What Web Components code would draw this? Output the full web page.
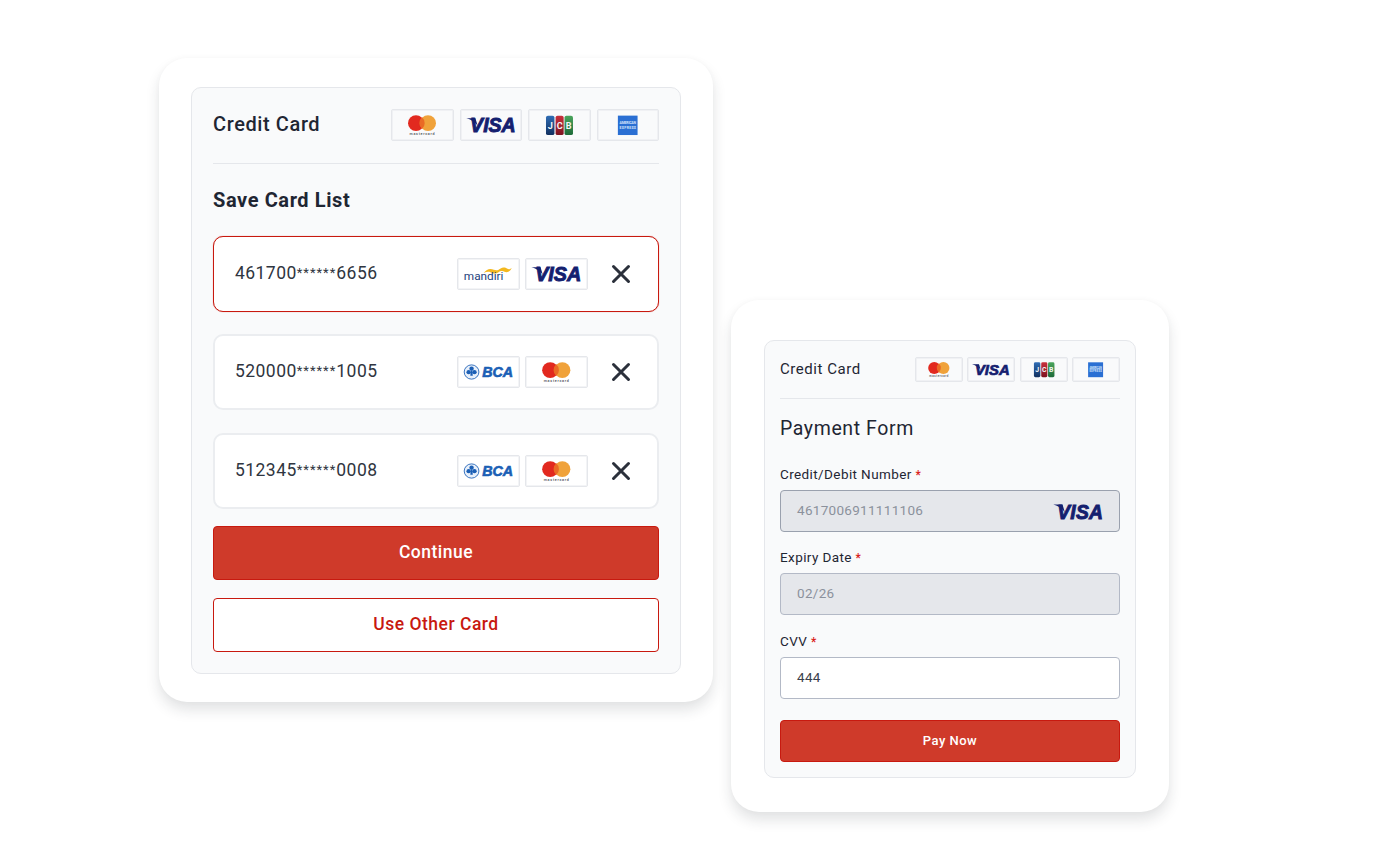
<!DOCTYPE html>
<html>
<head>
<meta charset="utf-8">
<title>Credit Card</title>
<style>
    html, body { margin: 0; background: #fff; }
    body { font-family: Roboto, "Liberation Sans", sans-serif; color: #1f2633; }
</style>
</head>
<body>

<pay-stage>
    <pay-shell big>
        <card-top big></card-top>
        <h-title big>Save Card List</h-title>
        <saved-card number="461700******6656" bank="mandiri" brand="visa" active></saved-card>
        <saved-card number="520000******1005" bank="bca" brand="mastercard"></saved-card>
        <saved-card number="512345******0008" bank="bca" brand="mastercard"></saved-card>
        <pay-button big>Continue</pay-button>
        <pay-button big outline>Use Other Card</pay-button>
    </pay-shell>

    <pay-shell>
        <card-top></card-top>
        <h-title>Payment Form</h-title>
        <form-field label="Credit/Debit Number" value="4617006911111106" disabled strong><card-logo type="visa" bare></card-logo></form-field>
        <form-field label="Expiry Date" value="02/26" disabled></form-field>
        <form-field label="CVV" value="444"></form-field>
        <pay-button>Pay Now</pay-button>
    </pay-shell>
</pay-stage>

<script>
const LOGOS = {
    mastercard: `
        <circle cx="25" cy="14" r="8.300" fill="#e2291f"/>
        <circle cx="37.500" cy="14" r="8.300" fill="#f0a23a"/>
        <path d="M31.250 7.800a8.300 8.300 0 0 1 0 12.400a8.300 8.300 0 0 1 0-12.400z" fill="#ea6a25"/>
        <text x="31.250" y="26.400" text-anchor="middle" font-size="3.800" font-weight="500" fill="#4a4b52" font-family="Roboto, sans-serif" textLength="26">mastercard</text>`,
    visa: `
        <path d="M5.500 8.800h9.500l2.500 8.500c-2-4-6.500-7-12-8.500z" fill="#14206f"/>
        <text x="9.500" y="24" font-size="21.500" font-weight="900" font-style="italic" fill="#14206f" stroke="#14206f" stroke-width="1" font-family="'Liberation Sans', sans-serif" textLength="47.500" lengthAdjust="spacingAndGlyphs">VISA</text>`,
    jcb: `
        <defs>
            <linearGradient id="jb" x1="0" y1="0" x2="0" y2="1"><stop offset="0" stop-color="#2f6db5"/><stop offset="1" stop-color="#12305f"/></linearGradient>
            <linearGradient id="jr" x1="0" y1="0" x2="0" y2="1"><stop offset="0" stop-color="#c9303c"/><stop offset="1" stop-color="#7c1420"/></linearGradient>
            <linearGradient id="jg" x1="0" y1="0" x2="0" y2="1"><stop offset="0" stop-color="#4aa55c"/><stop offset="1" stop-color="#1d6a38"/></linearGradient>
        </defs>
        <rect x="17.700" y="6" width="8.800" height="20.700" rx="2" fill="url(#jb)"/>
        <rect x="27.700" y="6" width="8.400" height="20.700" rx="2" fill="url(#jr)"/>
        <rect x="37" y="6" width="8.800" height="20.700" rx="2" fill="url(#jg)"/>
        <g font-size="9.500" font-weight="700" fill="#f4f6f8" text-anchor="middle" font-family="Roboto, sans-serif">
            <text x="22.100" y="19.800">J</text><text x="31.900" y="19.800">C</text><text x="41.400" y="19.800">B</text>
        </g>`,
    amex: `
        <rect x="20.700" y="6" width="20.500" height="20.700" fill="#2a6fd3"/>
        <g font-size="3.600" font-weight="700" fill="#d7e6fb" text-anchor="middle" font-family="Roboto, sans-serif">
            <text x="31" y="15.400" textLength="17">AMERICAN</text><text x="31" y="20" textLength="17">EXPRESS</text>
        </g>`,
    mandiri: `
        <path d="M26.500 15C30 10.500 33 10 37 11.500C40 12.500 41 12 44 10C46.500 8.500 49 9 51 10.500C52.500 11.500 53.500 11 55.500 9.500C54 13 51 15 48 13.500C46 12.500 44 12.500 41.500 14.500C39 16 36 15.500 33.500 14C31.500 13 29 13.500 26.500 15z" fill="#f3b81f"/>
        <text x="6" y="22.500" font-size="12.500" fill="#1e3f7d" font-family="Roboto, sans-serif" textLength="41" lengthAdjust="spacingAndGlyphs">mandiri</text>`,
    bca: `
        <circle cx="14" cy="16" r="7.600" fill="#e8f0fa" stroke="#1b5fb5" stroke-width=".9"/>
        <circle cx="14" cy="12.500" r="2.300" fill="#1b5fb5"/>
        <circle cx="11" cy="16.200" r="2.300" fill="#1b5fb5"/>
        <circle cx="17" cy="16.200" r="2.300" fill="#1b5fb5"/>
        <path d="M13.300 15h1.400l.6 5h-2.600z" fill="#1b5fb5"/>
        <text x="25" y="21.800" font-size="16.500" font-weight="900" font-style="italic" fill="#1b5fb5" stroke="#1b5fb5" stroke-width=".7" font-family="'Liberation Sans', sans-serif" textLength="32" lengthAdjust="spacingAndGlyphs">BCA</text>`
};

class PayStage extends HTMLElement {
    constructor() {
        super();
        this.attachShadow({mode: 'open'}).innerHTML = `
            <style>
                :host { display: flex; align-items: flex-start; gap: 18px; box-sizing: border-box;
                        width: 1396px; height: 862px; padding: 58px 0 0 159px; overflow: hidden; }
                ::slotted(pay-shell:last-child) { margin-top: 242px; }
            </style>
            <slot></slot>`;
    }
}

class PayShell extends HTMLElement {
    constructor() {
        super();
        this.attachShadow({mode: 'open'}).innerHTML = `
            <style>
                :host { display: block; box-sizing: border-box; background: #fff; width: 438px; height: 512px;
                        padding: 40px 33px 34px; border-radius: 28px;
                        box-shadow: 0 8px 14px rgba(30, 35, 50, .13), 0 0 6px rgba(30, 35, 50, .025); }
                :host([big]) { width: 554px; height: 644px; padding: 29px 32px 28px; }
                .panel { box-sizing: border-box; height: 100%; background: #f9fafb; border: 1px solid #e5e7eb;
                         border-radius: 10px; padding: 16px 15px 0; display: flex; flex-direction: column; }
                :host([big]) .panel { padding: 21px 21px 0; }
            </style>
            <div class="panel"><slot></slot></div>`;
    }
}

class CardLogo extends HTMLElement {
    constructor() {
        super();
        this.attachShadow({mode: 'open'}).innerHTML = `
            <style>
                :host { display: block; box-sizing: border-box; width: var(--logo-w, 63px); height: var(--logo-h, 32px);
                        background: transparent; border: 1px solid #e5e7eb; border-radius: 2px;
                        box-shadow: inset 0 0 0 1px rgba(229, 231, 235, .45); }
                :host([bare]) { background: none; border: 0; box-shadow: none; width: 61px; height: 31px; margin-right: 10px; }
                svg { display: block; width: 100%; height: 100%; }
            </style>
            <svg viewBox="0 0 63 32" preserveAspectRatio="none">${LOGOS[this.getAttribute('type')]}</svg>`;
    }
}

class CardTop extends HTMLElement {
    constructor() {
        super();
        this.attachShadow({mode: 'open'}).innerHTML = `
            <style>
                :host { display: flex; align-items: center; justify-content: space-between; box-sizing: border-box;
                        height: 42px; border-bottom: 1px solid #e5e7eb; padding-bottom: 16px; --logo-w: 48px; --logo-h: 25px; }
                :host([big]) { height: 55px; padding-bottom: 22px; --logo-w: 62.500px; --logo-h: 32px; }
                .name { font-size: 15px; letter-spacing: .55px; color: #1f2633; margin-top: -2px; }
                :host([big]) .name { font-size: 20px; font-weight: 500; letter-spacing: .6px; }
                .logos { display: flex; gap: 4.500px; }
                :host([big]) .logos { gap: 6px; }
            </style>
            <span class="name">Credit Card</span>
            <div class="logos">
                <card-logo type="mastercard"></card-logo>
                <card-logo type="visa"></card-logo>
                <card-logo type="jcb"></card-logo>
                <card-logo type="amex"></card-logo>
            </div>`;
    }
}

class HTitle extends HTMLElement {
    constructor() {
        super();
        this.attachShadow({mode: 'open'}).innerHTML = `
            <style>
                :host { display: block; font-size: 19.500px; line-height: 24px; letter-spacing: .6px; color: #1f2633;
                        margin: 18px 0 26px; }
                :host([big]) { font-weight: 700; font-size: 20px; letter-spacing: .6px; margin: 24px 0 24px; }
            </style>
            <slot></slot>`;
    }
}

class SavedCard extends HTMLElement {
    constructor() {
        super();
        const number = this.getAttribute('number').replace(/\*+/, '<span class="st">$&</span>');
        this.attachShadow({mode: 'open'}).innerHTML = `
            <style>
                :host { display: flex; align-items: center; box-sizing: border-box; height: 76px; background: #fff;
                        border: 2px solid #ebedf0; border-radius: 10px; padding: 0 26px 0 20px; margin-bottom: 23px; }
                :host([active]) { border: 1px solid #c8190f; padding: 0 27px 0 21px; margin-bottom: 22px;
                                  box-shadow: 0 0 1px rgba(200, 25, 15, .6); }
                :host(:nth-of-type(3)) { margin-bottom: 17px; }
                .num { flex: 1; font-size: 17.500px; letter-spacing: .45px; color: #2f3540; padding-bottom: 2px; }
                .st { font-size: 13px; letter-spacing: 1px; vertical-align: 2px; }
                .logos { display: flex; gap: 5px; margin-right: 23px; }
                svg { display: block; width: 20px; height: 20px; }
            </style>
            <span class="num">${number}</span>
            <div class="logos">
                <card-logo type="${this.getAttribute('bank')}"></card-logo>
                <card-logo type="${this.getAttribute('brand')}"></card-logo>
            </div>
            <svg viewBox="0 0 20 20"><path d="M2.500 2.500L17.500 17.500M17.500 2.500L2.500 17.500" stroke="#2b303b" stroke-width="3" stroke-linecap="round" fill="none"/></svg>`;
    }
}

class PayButton extends HTMLElement {
    constructor() {
        super();
        this.attachShadow({mode: 'open'}).innerHTML = `
            <style>
                :host { display: flex; align-items: center; justify-content: center; box-sizing: border-box; height: 42px;
                        background: #cf3a2a; border: 1px solid #c8190f; border-radius: 4px; color: #fff; padding-bottom: 2px;
                        font-size: 13px; font-weight: 500; letter-spacing: .5px; margin-top: 2px; }
                :host([big]) { height: 54px; font-size: 17.500px; margin-top: 0; margin-bottom: 18px; }
                :host([outline]) { background: #fff; color: #c8190f; }
            </style>
            <slot></slot>`;
    }
}

class FormField extends HTMLElement {
    constructor() {
        super();
        this.attachShadow({mode: 'open'}).innerHTML = `
            <style>
                :host { display: block; margin-bottom: 19px; }
                :host(:nth-of-type(1)) { margin-bottom: 18px; }
                label { display: block; font-size: 13.500px; line-height: 16px; letter-spacing: .4px; color: #1f2633;
                        margin-top: -1px; margin-bottom: 8px; }
                b { color: #d92018; font-weight: 500; font-size: 12px; line-height: 0; }
                .box { display: flex; align-items: center; justify-content: space-between; box-sizing: border-box; height: 42px;
                       background: #fff; border: 1px solid #b3b9c6; border-radius: 4px; padding: 0 0 0 16px;
                       font-size: 13.500px; letter-spacing: .3px; color: #3a404c; }
                .box span { padding-bottom: 2px; }
                :host([disabled]) .box { background: #e5e7eb; color: #8b919c; }
                :host([strong]) .box { border-color: #9aa1ae; }
            </style>
            <label>${this.getAttribute('label')} <b>*</b></label>
            <div class="box"><span>${this.getAttribute('value')}</span><slot></slot></div>`;
    }
}

customElements.define('pay-stage', PayStage);
customElements.define('pay-shell', PayShell);
customElements.define('card-logo', CardLogo);
customElements.define('card-top', CardTop);
customElements.define('h-title', HTitle);
customElements.define('saved-card', SavedCard);
customElements.define('pay-button', PayButton);
customElements.define('form-field', FormField);
</script>
</body>
</html>
